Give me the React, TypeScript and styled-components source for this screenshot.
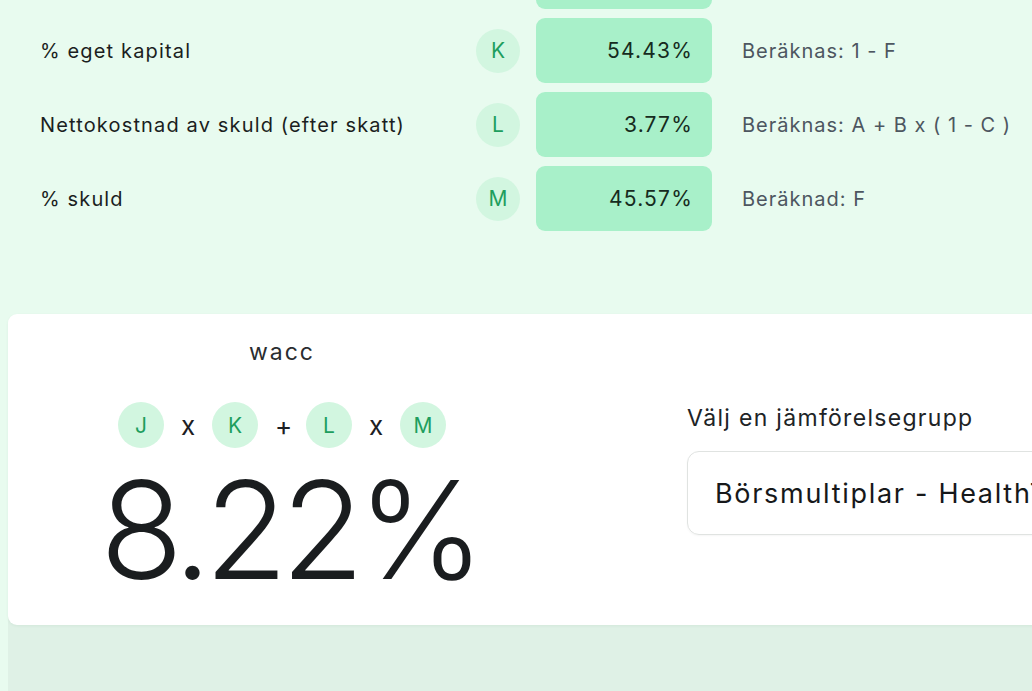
import styled, { createGlobalStyle } from 'styled-components';

const GlobalStyle = createGlobalStyle`
  html, body {
    margin: 0;
    padding: 0;
    background: #e8fbef;
    overflow: hidden;
    font-family: Inter, "Noto Sans", "Liberation Sans", sans-serif;
  }
`;

interface Row {
  label: string;
  letter: string;
  value: string;
  note: string;
}

const rows: Row[] = [
  { label: '% eget kapital', letter: 'K', value: '54.43%', note: 'Beräknas: 1 - F' },
  { label: 'Nettokostnad av skuld (efter skatt)', letter: 'L', value: '3.77%', note: 'Beräknas: A + B x ( 1 - C )' },
  { label: '% skuld', letter: 'M', value: '45.57%', note: 'Beräknad: F' },
];

const Page = styled.div`
  width: 1032px;
  height: 691px;
  overflow: hidden;
`;

const RowList = styled.div`
  display: flex;
  flex-direction: column;
  gap: 9px;
  margin-top: -56px;
  padding-left: 40px;
`;

const RowLine = styled.div`
  display: flex;
  align-items: center;
  height: 65px;
`;

const Label = styled.div`
  width: 436px;
  font-size: 20px;
  letter-spacing: 1.15px;
  color: #1b1e21;
`;

const Badge = styled.div<{ $size: number }>`
  width: ${p => p.$size}px;
  height: ${p => p.$size}px;
  flex: none;
  border-radius: 50%;
  background: #d2f6e0;
  color: #1e9e5e;
  display: flex;
  align-items: center;
  justify-content: center;
  font-size: 21px;
`;

const ValueBox = styled.div`
  width: 176px;
  height: 65px;
  margin-left: 16px;
  box-sizing: border-box;
  padding-right: 19px;
  border-radius: 9px;
  background: #a8f0c9;
  color: #162b20;
  font-size: 21px;
  letter-spacing: 1.2px;
  display: flex;
  align-items: center;
  justify-content: flex-end;
`;

/* the row above, scrolled out of view: only its box's lower edge shows */
const ScrolledBox = styled(ValueBox)`
  margin-left: 496px;
`;

const Note = styled.div`
  margin-left: 30px;
  font-size: 20px;
  letter-spacing: 1px;
  color: #4d5660;
`;

const Card = styled.section`
  margin: 83px 0 0 8px;
  width: 1100px;
  height: 311px;
  background: #fff;
  border-radius: 9px;
  box-shadow: 0 1px 3px rgba(20, 80, 50, 0.06), 0 90px 0 0 #dff1e6;
  display: grid;
  grid-template-columns: 548px 1fr;
`;

const ResultCol = styled.div`
  display: flex;
  flex-direction: column;
  align-items: center;
  padding-top: 24px;
`;

const Title = styled.div`
  font-size: 23px;
  line-height: 28px;
  letter-spacing: 2px;
  color: #2a2d30;
`;

const Formula = styled.div`
  display: flex;
  align-items: center;
  gap: 17px;
  margin-top: 36px;
`;

const Op = styled.span`
  width: 14px;
  text-align: center;
  font-size: 26px;
  color: #1d2023;
`;

const BigNumber = styled.div`
  margin-top: 14px;
  margin-left: 14px;
  font-size: 136px;
  line-height: 1;
  font-weight: 300;
  color: #1a1d1f;
  letter-spacing: -7px;
`;

const PickerCol = styled.div`
  align-self: center;
  padding-left: 131px;
  display: flex;
  flex-direction: column;
  gap: 19px;
`;

const PickerLabel = styled.div`
  font-size: 23px;
  line-height: 28px;
  letter-spacing: 1.3px;
  color: #202326;
`;

const Select = styled.div`
  width: 440px;
  height: 84px;
  box-sizing: border-box;
  border: 1px solid #e0e3e1;
  border-radius: 12px;
  padding-left: 27px;
  display: flex;
  align-items: center;
  font-size: 27px;
  letter-spacing: 1.7px;
  color: #16181a;
  white-space: nowrap;
  overflow: hidden;
  box-shadow: 0 1px 2px rgba(0, 0, 0, 0.04);
`;

export default function App() {
  const parts: (string | { l: string })[] = [{ l: 'J' }, 'x', { l: 'K' }, '+', { l: 'L' }, 'x', { l: 'M' }];
  return (
    <Page>
      <GlobalStyle />
      <RowList>
        <RowLine>
          <ScrolledBox />
        </RowLine>
        {rows.map(r => (
          <RowLine key={r.letter}>
            <Label>{r.label}</Label>
            <Badge $size={44}>{r.letter}</Badge>
            <ValueBox>{r.value}</ValueBox>
            <Note>{r.note}</Note>
          </RowLine>
        ))}
      </RowList>
      <Card>
        <ResultCol>
          <Title>wacc</Title>
          <Formula>
            {parts.map((p, i) =>
              typeof p === 'string'
                ? <Op key={i}>{p}</Op>
                : <Badge key={i} $size={46}>{p.l}</Badge>
            )}
          </Formula>
          <BigNumber>8.22%</BigNumber>
        </ResultCol>
        <PickerCol>
          <PickerLabel>Välj en jämförelsegrupp</PickerLabel>
          <Select>Börsmultiplar - HealthTech</Select>
        </PickerCol>
      </Card>
    </Page>
  );
}
